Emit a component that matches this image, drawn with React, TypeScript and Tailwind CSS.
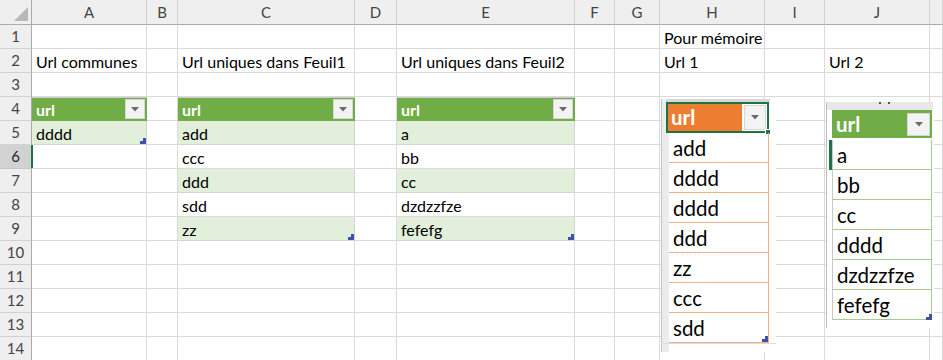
import type { ReactNode } from 'react';

type Kind = 'head' | 'band' | 'plain';
type Cell = { text?: string; kind?: Kind; handle?: boolean };

const COLS = ['A', 'B', 'C', 'D', 'E', 'F', 'G', 'H', 'I', 'J', 'K'];
const ROWS = Array.from({ length: 14 }, (_, i) => i + 1);

const cells: Record<string, Cell> = {
  A2: { text: 'Url communes' },
  C2: { text: 'Url uniques dans Feuil1' },
  E2: { text: 'Url uniques dans Feuil2' },
  H1: { text: 'Pour mémoire' },
  H2: { text: 'Url 1' },
  J2: { text: 'Url 2' },
  A4: { text: 'url', kind: 'head' },
  A5: { text: 'dddd', kind: 'band', handle: true },
  C4: { text: 'url', kind: 'head' },
  C5: { text: 'add', kind: 'band' },
  C6: { text: 'ccc', kind: 'plain' },
  C7: { text: 'ddd', kind: 'band' },
  C8: { text: 'sdd', kind: 'plain' },
  C9: { text: 'zz', kind: 'band', handle: true },
  E4: { text: 'url', kind: 'head' },
  E5: { text: 'a', kind: 'band' },
  E6: { text: 'bb', kind: 'plain' },
  E7: { text: 'cc', kind: 'band' },
  E8: { text: 'dzdzzfze', kind: 'plain' },
  E9: { text: 'fefefg', kind: 'band', handle: true },
};

const FONT = "font-['Lato','Liberation_Sans',sans-serif]";

const Handle = ({ className }: { className: string }) => (
  <svg className={className} width="6" height="6" viewBox="0 0 6 6">
    <polygon points="6,0 6,6 0,6 0,3 3,3 3,0" fill="#3f51a8" />
  </svg>
);

const DropButton = ({ className }: { className: string }) => (
  <div className={`flex items-center justify-center bg-[#f3f3f3] border border-[#d6d6d6] ${className}`}>
    <svg width="8" height="5" viewBox="0 0 8 5">
      <polygon points="0,0 8,0 4,4.5" fill="#6b6b6b" />
    </svg>
  </div>
);

function GridCell({ col, row }: { col: string; row: number }) {
  const c = cells[`${col}${row}`];
  const base = 'relative flex items-center border-r border-b whitespace-nowrap';
  if (c?.kind === 'head') {
    return (
      <div className={`${base} bg-[#70ad47] border-[#70ad47] border-t border-t-[#cfcfcf]`}>
        <span className="pl-[4px] pt-[1px] text-white font-bold text-[16px]">{c.text}</span>
        <DropButton className="absolute right-[1px] top-[1px] w-[20px] h-[20px]" />
      </div>
    );
  }
  const bg = c?.kind === 'band' ? 'bg-[#e2efda] border-[#d4d4d4]' : 'border-[#dadada]';
  return (
    <div className={`${base} ${bg}`}>
      {c?.text && <span className="pl-[4px] pt-[3px] text-[16px] text-black">{c.text}</span>}
      {c?.handle && <Handle className="absolute right-[0px] bottom-[0px]" />}
      {col === 'A' && row === 6 && <div className="absolute -left-[1px] top-0 bottom-0 w-[2px] bg-[#217346]" />}
    </div>
  );
}

function PicRow({ children, line, first }: { children: ReactNode; line: string; first?: boolean }) {
  return (
    <div className={`flex items-center h-[30px] border-b border-r pl-[4px] text-[20.5px] text-black ${line} ${first ? 'pt-[2px]' : 'pt-[1px]'}`}>
      {children}
    </div>
  );
}

// linked picture of the first url list (orange table)
function PictureOne() {
  const items = ['add', 'dddd', 'dddd', 'ddd', 'zz', 'ccc', 'sdd'];
  return (
    <div className="absolute left-[661px] top-[99px] w-[115px] h-[253px] bg-white flex">
      <div className="w-[8px] h-full bg-[#ececec] border-l border-[#c4c4c4]" />
      <div className="w-[100px] flex flex-col">
        <div className="h-[3px] -ml-[3px] w-[104px] bg-[#d9d9d9]" />
        <div className="relative -ml-[3px] w-[103px] h-[31px] border-2 border-[#217346] flex">
          <div className="w-[74px] h-full bg-[#ed7d31] flex items-center pl-[3px] text-white font-bold text-[20.5px]">url</div>
          <div className="flex-1 flex items-center justify-center bg-white">
            <DropButton className="w-[22px] h-[25px]" />
          </div>
          <div className="absolute -right-[4px] -bottom-[4px] w-[6px] h-[6px] bg-[#217346] border border-white" />
        </div>
        {items.map((t, i) => (
          <PicRow key={i} line="border-[#f4b084] relative" first={i === 0}>
            {t}
            {i === items.length - 1 && <Handle className="absolute right-[0px] bottom-[0px]" />}
          </PicRow>
        ))}
        <div className="h-[9px] -ml-[8px] w-[115px] border-t border-[#dcdcdc]" />
      </div>
    </div>
  );
}

// linked picture of the second url list (green table)
function PictureTwo() {
  const items = ['a', 'bb', 'cc', 'dddd', 'dzdzzfze', 'fefefg'];
  return (
    <div className="absolute left-[826px] top-[102px] w-[108px] h-[226px] bg-white flex flex-col">
      <div className="relative h-[8px] w-[107px] bg-[#e8e8e8] border-l border-[#bdbdbd]">
        <div className="absolute left-[52px] top-[0px] w-[2px] h-[2px] bg-[#555]" />
        <div className="absolute left-[61px] top-[0px] w-[2px] h-[2px] bg-[#555]" />
      </div>
      <div className="flex flex-1">
        <div className="w-[6px] border-l border-[#bdbdbd]" />
        <div className="w-[100px] flex flex-col">
          <div className="h-[28px] bg-[#70ad47] flex items-center pl-[4px] relative">
            <span className="text-white font-bold text-[20.5px]">url</span>
            <DropButton className="absolute right-[2px] top-[3px] w-[23px] h-[23px]" />
          </div>
          <div className="h-[2px]" />
          {items.map((t, i) => (
            <div key={i} className="relative">
              {i === 0 && <div className="absolute -left-[3px] top-0 bottom-0 w-[3px] bg-[#217346]" />}
              <PicRow line="border-[#a9c98f] border-l border-l-[#c9c9c9]" first={i === 0}>
                {t}
                {i === items.length - 1 && <Handle className="absolute right-[0px] bottom-[0px]" />}
              </PicRow>
            </div>
          ))}
        </div>
      </div>
    </div>
  );
}

export default function App() {
  return (
    <div className={`relative w-[943px] h-[360px] overflow-hidden bg-white ${FONT}`}>
      <div className="grid grid-cols-[32px_115px_31px_177px_42px_178px_40px_45px_105px_60px_105px_1fr] grid-rows-[25px_repeat(14,24px)]">
        {/* corner */}
        <div className="relative bg-[#efefef] border-r border-b border-[#ababab]">
          <svg className="absolute right-[3px] bottom-[3px]" width="14" height="14" viewBox="0 0 14 14">
            <polygon points="14,0 14,14 0,14" fill="#b8b8b8" />
          </svg>
        </div>
        {COLS.map((c) => (
          <div
            key={c}
            className="flex items-center justify-center bg-[#efefef] border-r border-r-[#d2d2d2] border-b border-b-[#ababab] text-[15px] text-[#444]"
          >
            {c === 'K' ? '' : c}
          </div>
        ))}
        {ROWS.map((r) => (
          <div key={r} className="contents">
            <div
              className={
                r === 6
                  ? 'flex items-center justify-center bg-[#d2d2d2] border-r border-r-[#ababab] border-b border-b-[#c6c6c6] text-[15px] text-[#262626]'
                  : 'flex items-center justify-center bg-[#efefef] border-r border-r-[#ababab] border-b border-b-[#d2d2d2] text-[15px] text-[#444]'
              }
            >
              {r}
            </div>
            {COLS.map((c) => (
              <GridCell key={c} col={c} row={r} />
            ))}
          </div>
        ))}
      </div>
      <PictureOne />
      <PictureTwo />
    </div>
  );
}
